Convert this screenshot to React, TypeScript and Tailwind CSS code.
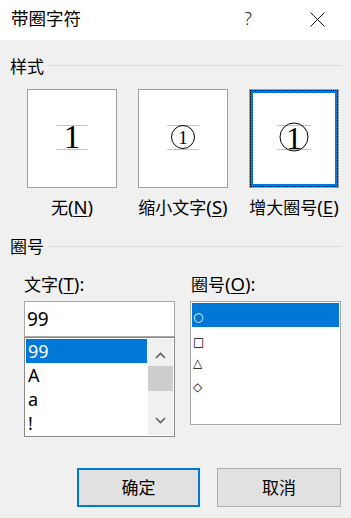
import React from "react";

function Chevron({ up }: { up?: boolean }) {
  return (
    <svg width="11" height="7" viewBox="0 0 11 7" className="block">
      {up ? (
        <polyline points="1,6 5.5,1.5 10,6" fill="none" stroke="#606060" strokeWidth="1.6" />
      ) : (
        <polyline points="1,1 5.5,5.5 10,1" fill="none" stroke="#606060" strokeWidth="1.6" />
      )}
    </svg>
  );
}

function StyleBox({
  label,
  keyChar,
  selected,
  children,
}: {
  label: string;
  keyChar: string;
  selected?: boolean;
  children: React.ReactNode;
}) {
  const inner = (
    <div className="flex-1 bg-white flex items-center justify-center pb-[3px]">
      {children}
    </div>
  );
  return (
    <div className="w-[90px] flex flex-col items-center">
      <div className="w-[90px] h-[99px] border border-[#a0a0a0] bg-white flex">
        {selected ? (
          <div className="flex-1 flex bg-[#0078d7] border border-dotted border-black p-[2px]">
            {inner}
          </div>
        ) : (
          inner
        )}
      </div>
      <div className="mt-[7px] leading-[24px] whitespace-nowrap">
        {label}
        <span className="text-[18.5px]">
          (<span className="underline underline-offset-2">{keyChar}</span>)
        </span>
      </div>
    </div>
  );
}

export default function App() {
  return (
    <div className="w-[351px] h-[518px] bg-[#f0f0f0] flex flex-col text-black text-[17px] overflow-hidden font-['Noto_Sans','Noto_Sans_CJK_SC',sans-serif]">
      {/* title bar */}
      <div className="h-[40px] shrink-0 bg-white flex items-center pl-[11px] pr-[26px] pb-[4px]">
        <span className="leading-[24px] text-[17.5px]">带圈字符</span>
        <span className="ml-auto w-[10px] text-center leading-[24px] font-light text-[#222] text-[18px]">?</span>
        <svg width="15" height="15" viewBox="0 0 15 15" className="ml-[57px] mt-[2px] block">
          <path d="M0.5 0.5 L14.5 14.5 M14.5 0.5 L0.5 14.5" stroke="#111" strokeWidth="1" fill="none" />
        </svg>
      </div>

      {/* 样式 */}
      <div className="mt-[15px] h-[24px] flex items-start pl-[10px] pr-[9px]">
        <span className="leading-[24px]">样式</span>
        <div className="flex-1 h-px bg-[#dadada] mt-[10px] ml-[4px]" />
      </div>

      <div className="mt-[10px] flex gap-[21px] pl-[27px]">
        <StyleBox label="无" keyChar="N">
          <div className="relative w-[32px] h-[25px] border-y border-[#c4c4c4]">
            <span className="absolute left-1/2 -translate-x-1/2 bottom-[-5px] leading-none text-[33px] font-['Liberation_Serif',serif]">
              1
            </span>
          </div>
        </StyleBox>
        <StyleBox label="缩小文字" keyChar="S">
          <div className="relative w-[32px] h-[25px] border-y border-[#c4c4c4]">
            <div className="absolute left-1/2 top-1/2 -translate-x-1/2 -translate-y-1/2 w-[24px] h-[24px] rounded-full border border-black flex items-center justify-center">
              <span className="leading-none text-[19px] font-['Liberation_Serif',serif]">1</span>
            </div>
          </div>
        </StyleBox>
        <StyleBox label="增大圈号" keyChar="E" selected>
          <div className="relative w-[34px] h-[25px] border-y border-[#c4c4c4]">
            <div className="absolute left-1/2 top-1/2 -translate-x-1/2 -translate-y-1/2 w-[29px] h-[29px] rounded-full border border-black flex items-center justify-center">
              <span className="leading-none text-[32px] font-['Liberation_Serif',serif]">1</span>
            </div>
          </div>
        </StyleBox>
      </div>

      {/* 圈号 */}
      <div className="mt-[15px] h-[24px] flex items-start pl-[10px] pr-[9px]">
        <span className="leading-[24px]">圈号</span>
        <div className="flex-1 h-px bg-[#dadada] mt-[11px] ml-[4px]" />
      </div>

      <div className="mt-[13px] flex gap-[15px] pl-[24px] pr-[10px]">
        {/* left column */}
        <div className="w-[151px] flex flex-col">
          <div className="leading-[24px]">
            文字
            <span className="text-[18.5px]">
              (<span className="underline underline-offset-2">T</span>):
            </span>
          </div>
          <div className="mt-[4px] h-[36px] border border-[#a9a9a9] bg-white flex items-center pl-[2px] text-[19px]">
            <span className="leading-[24px]">99</span>
          </div>
          <div className="h-[100px] border border-[#8a8a8a] bg-white flex text-[18px]">
            <div className="flex-1 p-[1px] flex flex-col">
              <div className="h-[24px] leading-[24px] pl-[2px] bg-[#0078d7] text-white">99</div>
              <div className="h-[24px] leading-[24px] pl-[2px]">A</div>
              <div className="h-[24px] leading-[24px] pl-[2px]">a</div>
              <div className="h-[24px] leading-[24px] pl-[2px]">!</div>
            </div>
            <div className="w-[25px] my-[1px] mr-[1px] bg-[#f0f0f0] flex flex-col">
              <div className="h-[27px] flex items-center justify-center pt-[5px]">
                <Chevron up />
              </div>
              <div className="h-[25px] bg-[#cdcdcd]" />
              <div className="flex-1" />
              <div className="h-[26px] flex items-center justify-center pb-[3px]">
                <Chevron />
              </div>
            </div>
          </div>
        </div>

        {/* right column */}
        <div className="w-[151px] flex flex-col">
          <div className="leading-[24px] pl-[1px]">
            圈号
            <span className="text-[18.5px]">
              (<span className="underline underline-offset-2">O</span>):
            </span>
          </div>
          <div className="mt-[4px] h-[124px] border border-[#a9a9a9] bg-white p-[1px] flex flex-col font-['DejaVu_Sans',sans-serif] text-[12px]">
            <div className="h-[24px] flex items-center pl-[1px] pt-[4px] bg-[#0078d7] text-white">○</div>
            <div className="h-[24px] flex items-center pl-[1px] pt-[5px]">□</div>
            <div className="h-[24px] flex items-center pl-[1px]">△</div>
            <div className="h-[24px] flex items-center pl-[1px]">◇</div>
          </div>
        </div>
      </div>

      {/* buttons */}
      <div className="mt-[31px] flex justify-end gap-[17px] pr-[10px]">
        <div className="w-[123px] h-[39px] border-2 border-[#0078d7] bg-[#e1e1e1] flex items-center justify-center">
          <span className="leading-[24px]">确定</span>
        </div>
        <div className="w-[124px] h-[39px] border border-[#adadad] bg-[#e1e1e1] flex items-center justify-center">
          <span className="leading-[24px]">取消</span>
        </div>
      </div>
    </div>
  );
}
